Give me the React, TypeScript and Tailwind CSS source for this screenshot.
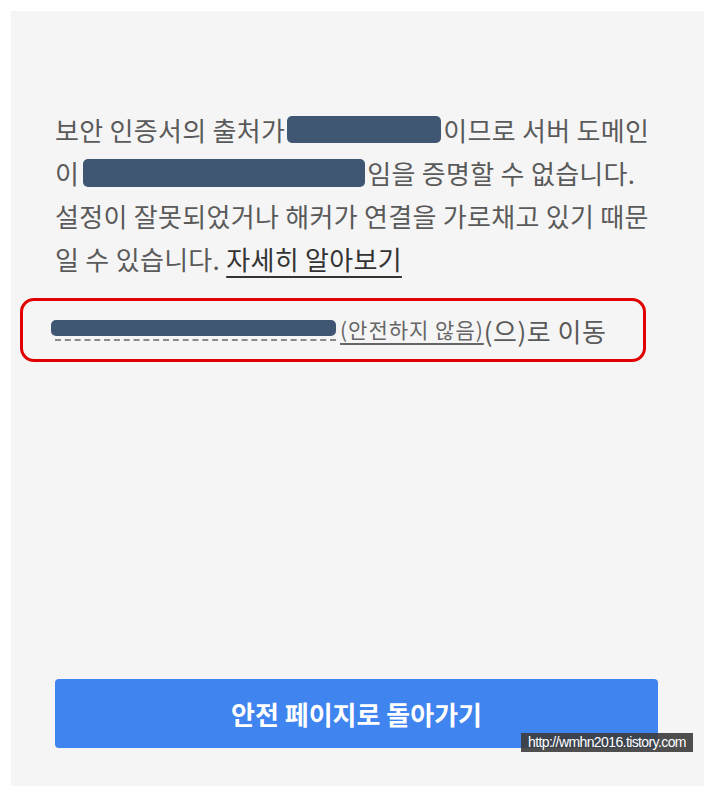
import React from 'react';

const Redact: React.FC<{ className: string }> = ({ className }) => (
  <span className={`inline-block rounded-[5px] bg-[#3f5772] align-middle ${className}`} />
);

const App: React.FC = () => {
  return (
    <div className="w-[720px] h-[796px] bg-white pl-[11px] pt-[11px] relative" style={{ fontFamily: '"Noto Sans CJK KR", "Noto Sans", sans-serif' }}>
      <div className="w-[693px] h-[775px] bg-[#f5f5f5] flex flex-col pl-[44px] pr-[20px] pt-[97px] pb-[38px]">
        <div className="text-[26px] leading-[43px] tracking-[0.3px] text-[#5a5a5a] whitespace-nowrap">
          <div className="flex items-center">
            <span>보안 인증서의 출처가</span>
            <Redact className="w-[154px] h-[27px] ml-[2px]" />
            <span className="ml-[2px]">이므로 서버 도메인</span>
          </div>
          <div className="flex items-center">
            <span>이</span>
            <Redact className="w-[282px] h-[28px] ml-[4px]" />
            <span className="ml-[2px]">임을 증명할 수 없습니다.</span>
          </div>
          <div>설정이 잘못되었거나 해커가 연결을 가로채고 있기 때문</div>
          <div>
            일 수 있습니다. <span className="text-[#333] underline underline-offset-[6px] decoration-[1.5px]">자세히 알아보기</span>
          </div>
        </div>

        <div className="mt-[18px] -ml-[35px] w-[626px] h-[64px] border-[3px] border-[#e00000] rounded-[14px] flex items-center pl-[28px] whitespace-nowrap">
          <span className="flex flex-col">
            <Redact className="w-[285px] h-[16px] rounded-[3px]" />
            <span className="mt-[3px] ml-[4px] w-[281px] border-b-[2px] border-dashed border-[#8a8a8a]" />
          </span>
          <span className="ml-[4px] text-[21px] tracking-[1px] text-[#666] underline underline-offset-[5px]">(안전하지 않음)</span>
          <span className="text-[26px] tracking-[0.5px] text-[#5a5a5a]">(으)로 이동</span>
        </div>

        <button className="mt-auto w-[603px] h-[69px] rounded-[4px] bg-[#3f84ef] text-white text-[26px] font-semibold flex items-center justify-center">
          안전 페이지로 돌아가기
        </button>
      </div>

      <div
        className="absolute left-[521px] top-[733px] w-[172px] h-[19px] bg-[#3c3c3c]/90 text-white text-[14px] leading-[19px] text-center tracking-[-0.6px]"
        style={{ fontFamily: '"Liberation Sans", Arial, sans-serif' }}
      >
        http://wmhn2016.tistory.com
      </div>
    </div>
  );
};

export default App;
